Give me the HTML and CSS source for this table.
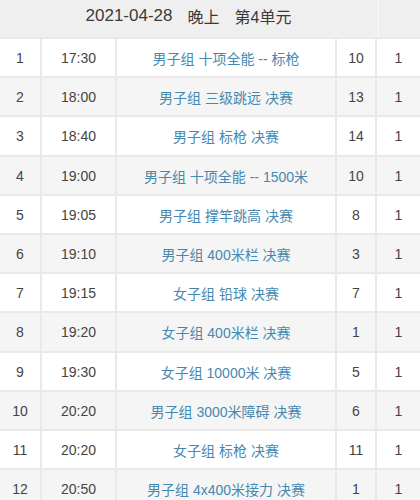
FILE: index.html
```html
<!DOCTYPE html>
<html lang="zh">
<head>
<meta charset="utf-8">
<link rel="stylesheet" href="styles.css">
</head>
<body>
<div class="sheet">
  <div class="head">
    <div class="head-title"><span class="date">2021-04-28</span><span>晚上</span><span>第4单元</span></div>
    <div class="head-end"></div>
  </div>
  <div class="row odd"><div class="c n">1</div><div class="c t">17:30</div><div class="c e">男子组 十项全能 -- 标枪</div><div class="c a">10</div><div class="c b">1</div></div>
  <div class="row even"><div class="c n">2</div><div class="c t">18:00</div><div class="c e">男子组 三级跳远 决赛</div><div class="c a">13</div><div class="c b">1</div></div>
  <div class="row odd"><div class="c n">3</div><div class="c t">18:40</div><div class="c e">男子组 标枪 决赛</div><div class="c a">14</div><div class="c b">1</div></div>
  <div class="row even"><div class="c n">4</div><div class="c t">19:00</div><div class="c e">男子组 十项全能 -- 1500米</div><div class="c a">10</div><div class="c b">1</div></div>
  <div class="row odd"><div class="c n">5</div><div class="c t">19:05</div><div class="c e">男子组 撑竿跳高 决赛</div><div class="c a">8</div><div class="c b">1</div></div>
  <div class="row even"><div class="c n">6</div><div class="c t">19:10</div><div class="c e">男子组 400米栏 决赛</div><div class="c a">3</div><div class="c b">1</div></div>
  <div class="row odd"><div class="c n">7</div><div class="c t">19:15</div><div class="c e">女子组 铅球 决赛</div><div class="c a">7</div><div class="c b">1</div></div>
  <div class="row even"><div class="c n">8</div><div class="c t">19:20</div><div class="c e">女子组 400米栏 决赛</div><div class="c a">1</div><div class="c b">1</div></div>
  <div class="row odd"><div class="c n">9</div><div class="c t">19:30</div><div class="c e">女子组 10000米 决赛</div><div class="c a">5</div><div class="c b">1</div></div>
  <div class="row even"><div class="c n">10</div><div class="c t">20:20</div><div class="c e">男子组 3000米障碍 决赛</div><div class="c a">6</div><div class="c b">1</div></div>
  <div class="row odd"><div class="c n">11</div><div class="c t">20:20</div><div class="c e">女子组 标枪 决赛</div><div class="c a">11</div><div class="c b">1</div></div>
  <div class="row even"><div class="c n">12</div><div class="c t">20:50</div><div class="c e">男子组 4x400米接力 决赛</div><div class="c a">1</div><div class="c b">1</div></div>
</div>
</body>
</html>
```
FILE: styles.css
```css
html, body {
  margin: 0;
  padding: 0;
  background: #ffffff;
}
body {
  font-family: "Liberation Sans", "Noto Sans CJK SC", sans-serif;
  color: #3a3a3a;
  overflow: hidden;
}
.sheet {
  width: 420px;
}
.head {
  display: flex;
  height: 37px;
  background: #efefef;
}
.head-title {
  flex: 1;
  display: flex;
  justify-content: center;
  align-items: center;
  gap: 15px;
  font-size: 16px;
  color: #3a3a3a;
  padding-bottom: 5px;
  border-right: 2px solid #f5f5f5;
}
.date {
  font-size: 17px;
}
.head-end {
  width: 41px;
}
.row {
  display: flex;
  height: 39.2px;
  box-sizing: border-box;
  border-top: 2px solid #e9e9e9;
}
.row.odd { background: #ffffff; }
.row.even { background: #f5f5f5; }
.c {
  display: flex;
  align-items: center;
  justify-content: center;
  font-size: 14px;
  color: #444444;
  box-sizing: border-box;
  border-right: 2px solid #e9e9e9;
  padding-top: 1px;
}
.c:last-child { border-right: none; }
.n { width: 42px; }
.t { width: 75px; }
.e { width: 220px; color: #4689b0; font-size: 14px; }
.a { width: 40px; }
.b { flex: 1; }
```
